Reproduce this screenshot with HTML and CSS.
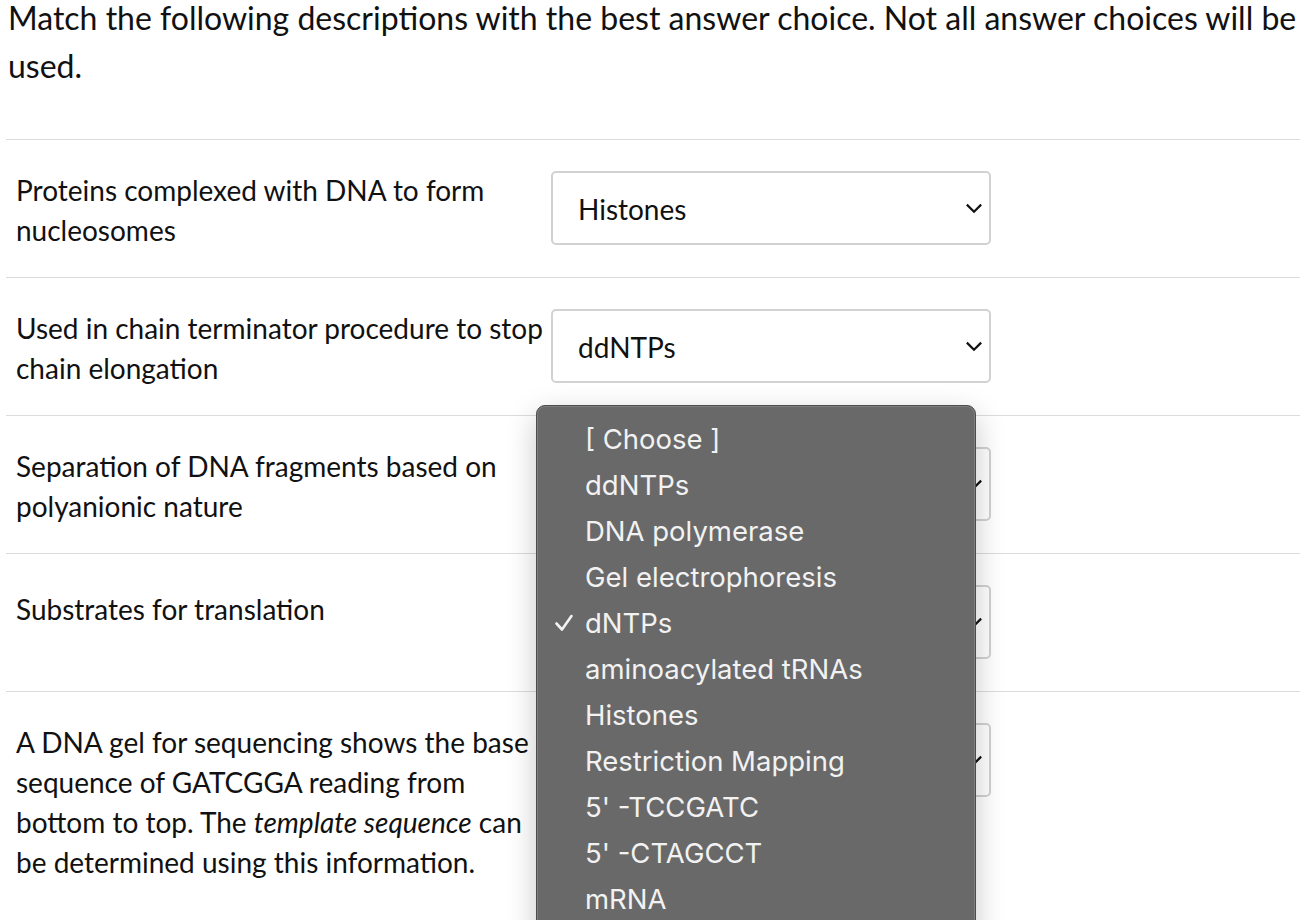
FILE: index.html
```html
<!DOCTYPE html>
<html>
<head>
<meta charset="utf-8">
<link rel="stylesheet" href="styles.css">
</head>
<body>
<div class="page">
  <p class="prompt">Match the following descriptions with the best answer choice. Not all answer choices will be used.</p>
  <div class="rows">
    <div class="row">
      <div class="desc">Proteins complexed with DNA to form nucleosomes</div>
      <div class="select"><span>Histones</span><svg class="chev" viewBox="0 0 16 10"><path d="M1.5 1.5 L8 8 L14.5 1.5"/></svg></div>
    </div>
    <div class="row">
      <div class="desc">Used in chain terminator procedure to stop chain elongation</div>
      <div class="select"><span>ddNTPs</span><svg class="chev" viewBox="0 0 16 10"><path d="M1.5 1.5 L8 8 L14.5 1.5"/></svg></div>
    </div>
    <div class="row">
      <div class="desc">Separation of DNA fragments based on polyanionic nature</div>
      <div class="select-wrap">
        <div class="select"><span></span><svg class="chev" viewBox="0 0 16 10"><path d="M1.5 1.5 L8 8 L14.5 1.5"/></svg></div>
        <ul class="menu">
          <li>[ Choose ]</li>
          <li>ddNTPs</li>
          <li>DNA polymerase</li>
          <li>Gel electrophoresis</li>
          <li class="checked"><svg class="check" viewBox="0 0 20 20"><path d="M2.5 10.5 L8 16.5 L17.5 3"/></svg>dNTPs</li>
          <li>aminoacylated tRNAs</li>
          <li>Histones</li>
          <li>Restriction Mapping</li>
          <li>5' -TCCGATC</li>
          <li>5' -CTAGCCT</li>
          <li>mRNA</li>
        </ul>
      </div>
    </div>
    <div class="row">
      <div class="desc single">Substrates for translation</div>
      <div class="select"><span></span><svg class="chev" viewBox="0 0 16 10"><path d="M1.5 1.5 L8 8 L14.5 1.5"/></svg></div>
    </div>
    <div class="row last">
      <div class="desc">A DNA gel for sequencing shows the base sequence of GATCGGA reading from bottom to top. The <em>template sequence</em> can be determined using this information.</div>
      <div class="select"><span></span><svg class="chev" viewBox="0 0 16 10"><path d="M1.5 1.5 L8 8 L14.5 1.5"/></svg></div>
    </div>
  </div>
</div>
</body>
</html>
```

FILE: styles.css
```css
html {
  overflow: hidden;
}
html, body {
  margin: 0;
  padding: 0;
  background: #ffffff;
}
body {
  font-family: Lato, "Open Sans", sans-serif;
  color: #111;
}
.page {
  padding: 0 1px 0 6px;
}
.prompt {
  margin: -6px 0 0 0;
  padding: 0 0 0 2px;
  font-size: 32px;
  line-height: 48px;
  height: 145px;
  box-sizing: border-box;
}
.rows {
  border-top: 1px solid #dcdcdc;
}
.row {
  display: flex;
  align-items: flex-start;
  min-height: 80px;
  padding: 30px 0 27px 10px;
  border-bottom: 1px solid #dcdcdc;
}
.row.last {
  border-bottom: none;
  padding-bottom: 40px;
}
.desc {
  width: 535px;
  font-size: 28px;
  line-height: 40px;
}
.desc.single {
  margin-top: 5px;
}
.select-wrap {
  position: relative;
  margin-top: 1px;
}
.row > .select {
  margin-top: 1px;
}
.select {
  width: 440px;
  height: 74px;
  box-sizing: border-box;
  border: 2px solid #d2d2d2;
  border-radius: 5px;
  display: flex;
  align-items: center;
  justify-content: space-between;
  padding: 0 6px 0 25px;
  font-size: 28px;
  color: #111;
  background: #fff;
}
.select span {
  padding-top: 1px;
}
.chev {
  width: 18px;
  height: 11px;
}
.chev path {
  fill: none;
  stroke: #111;
  stroke-width: 2;
}
.menu {
  position: absolute;
  left: -15px;
  top: -42px;
  width: 440px;
  box-sizing: border-box;
  margin: 0;
  padding: 10px 0 20px 0;
  list-style: none;
  background: #696969;
  border: 1px solid #4c4c4c;
  border-radius: 9px;
  box-shadow: 0 0 0 1px rgba(255,255,255,0.15) inset, 0 10px 30px rgba(0,0,0,0.22);
  font-family: Inter, "Liberation Sans", sans-serif;
  font-size: 27.5px;
  color: #f2f2f2;
  z-index: 10;
}
.menu li {
  height: 46px;
  line-height: 46px;
  padding-left: 48px;
  position: relative;
}
.check {
  position: absolute;
  left: 17px;
  top: 13px;
  width: 20px;
  height: 20px;
}
.check path {
  fill: none;
  stroke: #f2f2f2;
  stroke-width: 2.6;
  stroke-linecap: round;
  stroke-linejoin: round;
}
```
